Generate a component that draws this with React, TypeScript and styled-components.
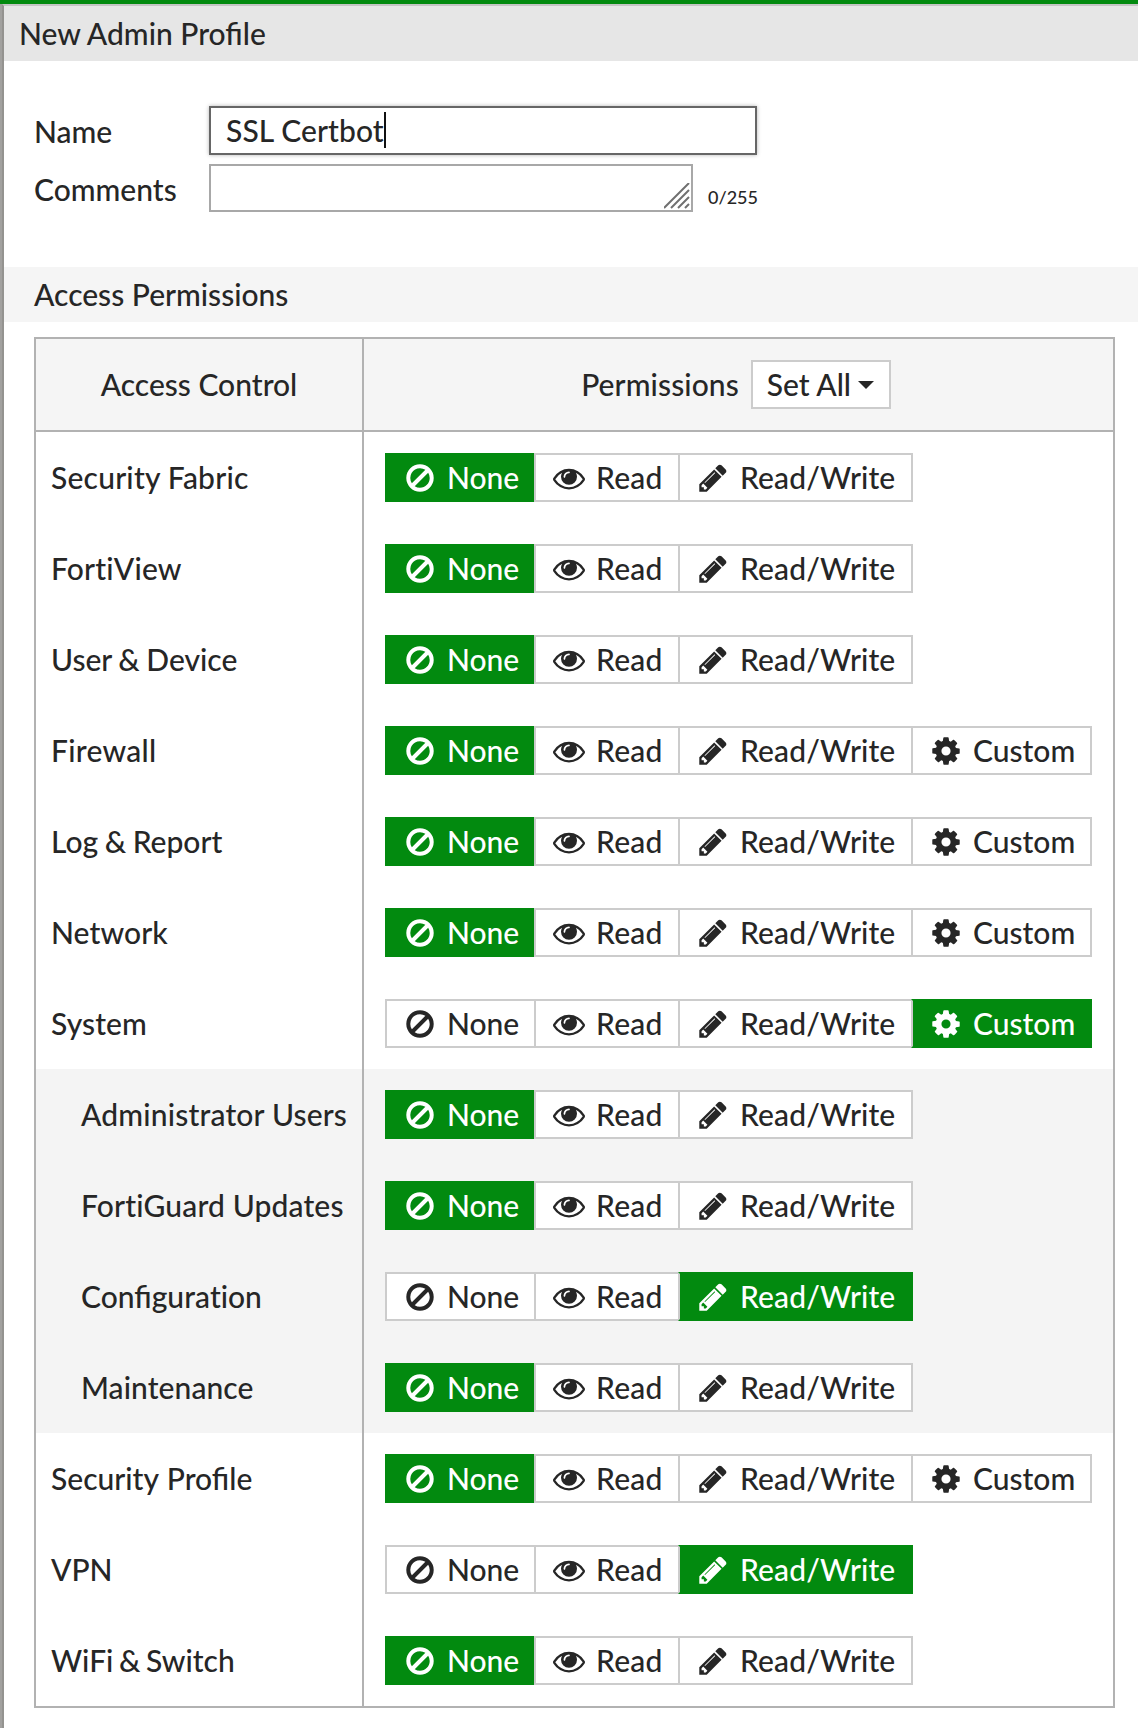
import React from "react";
import styled, { createGlobalStyle, css } from "styled-components";

const GlobalStyle = createGlobalStyle`
  *, *::before, *::after { box-sizing: border-box; }
  html, body { margin: 0; background: #fff; }
  body {
    font-family: Lato, "Open Sans", sans-serif;
    font-size: 30px;
    font-weight: 500;
    line-height: 40px;
    color: #262626;
  }
`;

const GREEN = "#028a0f";
const LINE = "#b2b2b2";

const Page = styled.div`
  height: 1728px;
  overflow: hidden;
  display: flex;
  flex-direction: column;
  border-top: 4px solid ${GREEN};
  background: #a2a19f;
`;

const Dialog = styled.main`
  flex: 1;
  margin-left: 2px;
  border-top: 2px solid #c4c4c4;
  border-left: 2px solid #949390;
  background: #fff;
`;

const TitleBar = styled.h1`
  margin: 0;
  height: 55px;
  padding: 7px 15px;
  background: #e6e6e6;
  font-size: 30px;
  font-weight: inherit;
  line-height: 40px;
`;

const Form = styled.form`
  display: flex;
  flex-direction: column;
  gap: 9px;
  padding: 45px 30px 55px;
`;

const Field = styled.div`
  display: flex;
  align-items: center;
`;

const Label = styled.label`
  width: 175px;
  padding-top: 1px;
`;

const NameInput = styled.div`
  width: 548px;
  height: 49px;
  display: flex;
  align-items: center;
  padding: 0 15px 2px;
  border: 2px solid #666;
  background: #fff;
  box-shadow: 0 0 4px rgba(0, 0, 0, 0.3);
  letter-spacing: 0.1px;
`;

const Caret = styled.span`
  width: 2px;
  height: 36px;
  background: #111;
`;

const CommentsInput = styled.div`
  width: 484px;
  height: 48px;
  display: flex;
  justify-content: flex-end;
  align-items: flex-end;
  padding: 0 1px 1px;
  border: 2px solid #a8a8a8;
`;

const Counter = styled.span`
  margin: 18px 0 0 15px;
  font-size: 18px;
  line-height: 24px;
`;

const SectionTitle = styled.h2`
  margin: 0;
  height: 55px;
  padding: 7px 30px;
  background: #f5f5f5;
  font-size: 30px;
  font-weight: inherit;
  line-height: 40px;
`;

const Table = styled.section`
  width: 1081px;
  margin: 15px 0 0 30px;
  border: 2px solid ${LINE};
`;

const rowGrid = css`
  display: grid;
  grid-template-columns: 326px 1fr;
`;

const HeadRow = styled.div`
  ${rowGrid}
  height: 93px;
  background: #f5f5f5;
  border-bottom: 2px solid ${LINE};
`;

const HeadCell = styled.div<{ $divided?: boolean }>`
  display: flex;
  align-items: center;
  justify-content: center;
  gap: 12px;
  padding-right: ${(p) => (p.$divided ? 5 : 0)}px;
  border-left: ${(p) => (p.$divided ? `2px solid ${LINE}` : "none")};
`;

const HeadText = styled.span<{ $tracking?: number }>`
  padding-bottom: 2px;
  letter-spacing: ${(p) => p.$tracking ?? 0}px;
`;

const SetAll = styled.button`
  width: 140px;
  height: 49px;
  display: flex;
  align-items: center;
  justify-content: space-between;
  padding: 0 15px 0 14px;
  border: 2px solid #ccc;
  background: #fff;
  color: inherit;
  font: inherit;
  white-space: nowrap;
`;

const Row = styled.div<{ $nested?: boolean }>`
  ${rowGrid}
  height: 91px;
  background: ${(p) => (p.$nested ? "#f4f4f4" : "#fff")};
`;

const RowLabel = styled.div<{ $nested?: boolean; $tracking: number; $wordGap: number }>`
  align-self: center;
  padding: 0 0 2px ${(p) => (p.$nested ? 45 : 15)}px;
  letter-spacing: ${(p) => p.$tracking}px;
  word-spacing: ${(p) => p.$wordGap}px;
  white-space: nowrap;
`;

const Unjoined = styled.span`
  font-variant-ligatures: none;
`;

const RowOptions = styled.div`
  display: flex;
  align-items: center;
  padding-left: 21px;
  border-left: 2px solid ${LINE};
`;

const Option = styled.button<{ $width: number; $selected: boolean }>`
  width: ${(p) => p.$width}px;
  height: 49px;
  display: flex;
  align-items: center;
  padding: 0 0 0 17px;
  border: 2px solid ${(p) => (p.$selected ? GREEN : "#ccc")};
  background: ${(p) => (p.$selected ? GREEN : "#fff")};
  color: ${(p) => (p.$selected ? "#fff" : "inherit")};
  font: inherit;
  white-space: nowrap;

  & + & {
    margin-left: -2px;
    border-left-color: #ccc;
  }
`;

const OptionText = styled.span<{ $tracking: number }>`
  margin-left: 11px;
  padding-bottom: 2px;
  letter-spacing: ${(p) => p.$tracking}px;
`;

const Glyph = styled.svg`
  flex: none;
  width: 32px;
  height: 32px;
  fill: currentColor;
`;

type Level = "none" | "read" | "write" | "custom";

const icons: Record<Level, string> = {
  none: "M1440 893q0-161-87-295l-754 753q137 89 297 89 111 0 211.5-43.5t173.5-116.5 116-174.5 43-212.5zm-999 299l755-754q-135-91-300-91-148 0-273 73t-198 199-73 274q0 162 89 299zm1223-299q0 157-61 300t-163.5 246-245 164-298.5 61-298.5-61-245-164-163.5-246-61-300 61-299.5 163.5-245.5 245-164 298.5-61 298.5 61 245 164 163.5 245.5 61 299.5z",
  read: "M1664 960q-152-236-381-353 61 104 61 225 0 185-131.5 316.5t-316.5 131.5-316.5-131.5-131.5-316.5q0-121 61-225-229 117-381 353 133 205 333.5 326.5t434.5 121.5 434.5-121.5 333.5-326.5zm-720-384q0-20-14-34t-34-14q-125 0-214.5 89.5t-89.5 214.5q0 20 14 34t34 14 34-14 14-34q0-86 61-147t147-61q20 0 34-14t14-34zm848 384q0 34-20 69-140 230-376.5 368.5t-499.5 138.5-499.5-139-376.5-368q-20-35-20-69t20-69q140-229 376.5-368t499.5-139 499.5 139 376.5 368q20 35 20 69z",
  write: "M491 1536l91-91-235-235-91 91v107h128v128h107zm523-928q0-22-22-22-10 0-17 7l-542 542q-7 7-7 17 0 22 22 22 10 0 17-7l542-542q7-7 7-17zm-54-192l416 416-832 832h-416v-416zm683 96q0 53-37 90l-166 166-416-416 166-165q36-38 90-38 53 0 91 38l235 234q37 39 37 91z",
  custom: "M1152 896q0-106-75-181t-181-75-181 75-75 181 75 181 181 75 181-75 75-181zm512-109v222q0 12-8 23t-20 13l-185 28q-19 54-39 91 35 50 107 138 10 12 10 25t-9 23q-27 37-99 108t-94 71q-12 0-26-9l-138-108q-44 23-91 38-16 136-29 186-7 28-36 28h-222q-14 0-24.5-8.5t-11.5-21.5l-28-184q-49-16-90-37l-141 107q-10 9-25 9-14 0-25-11-126-114-165-168-7-10-7-23 0-12 8-23 15-21 51-66.5t54-70.5q-27-50-41-99l-183-27q-13-2-21-12.5t-8-23.5v-222q0-12 8-23t19-13l186-28q14-46 39-92-40-57-107-138-10-12-10-24 0-10 9-23 26-36 98.5-107.5t94.5-71.5q13 0 26 10l138 107q44-23 91-38 16-136 29-186 7-28 36-28h222q14 0 24.5 8.5t11.5 21.5l28 184q49 16 90 37l142-107q9-9 24-9 13 0 25 10 129 119 165 170 7 8 7 22 0 12-8 23-15 21-51 66.5t-54 70.5q26 50 41 98l183 28q13 2 21 12.5t8 23.5z",
};

const levels: { id: Level; text: string; width: number; tracking: number }[] = [
  { id: "none", text: "None", width: 151, tracking: 0 },
  { id: "read", text: "Read", width: 146, tracking: 0.25 },
  { id: "write", text: "Read/Write", width: 235, tracking: 0.12 },
  { id: "custom", text: "Custom", width: 181, tracking: 0 },
];

interface Permission {
  name: string;
  value: Level;
  custom?: boolean;
  nested?: boolean;
  tracking?: number;
  wordGap?: number;
}

const permissions: Permission[] = [
  { name: "Security Fabric", value: "none", tracking: 0.22 },
  { name: "FortiView", value: "none", tracking: 0.18 },
  { name: "User & Device", value: "none", wordGap: -1 },
  { name: "Firewall", value: "none", custom: true, tracking: 0.28 },
  { name: "Log & Report", value: "none", custom: true, wordGap: -1 },
  { name: "Network", value: "none", custom: true, tracking: 0.1 },
  { name: "System", value: "custom", custom: true, tracking: 0.1 },
  { name: "Administrator Users", value: "none", nested: true, tracking: 0.18 },
  { name: "FortiGuard Updates", value: "none", nested: true, tracking: 0.14 },
  { name: "Configuration", value: "write", nested: true },
  { name: "Maintenance", value: "none", nested: true, tracking: 0.08 },
  { name: "Security Profile", value: "none", custom: true, wordGap: 1 },
  { name: "VPN", value: "write" },
  { name: "WiFi & Switch", value: "none", wordGap: -2 },
];

// Keeps "fi" joined but draws "t" and "i" as separate letters.
function LabelText({ text }: { text: string }) {
  const [before, after] = text.split("ti");
  if (after === undefined) return <>{text}</>;
  return (
    <>
      {before}
      <Unjoined>ti</Unjoined>
      {after}
    </>
  );
}

function PermissionRow({ name, value, custom, nested, tracking = 0, wordGap = 0 }: Permission) {
  return (
    <Row $nested={nested}>
      <RowLabel $nested={nested} $tracking={tracking} $wordGap={wordGap}>
        <LabelText text={name} />
      </RowLabel>
      <RowOptions>
        {levels
          .filter((level) => custom || level.id !== "custom")
          .map((level) => (
            <Option key={level.id} type="button" $width={level.width} $selected={level.id === value}>
              <Glyph viewBox="0 0 1792 1792">
                <path d={icons[level.id]} />
              </Glyph>
              <OptionText $tracking={level.tracking}>{level.text}</OptionText>
            </Option>
          ))}
      </RowOptions>
    </Row>
  );
}

export default function App() {
  return (
    <Page>
      <GlobalStyle />
      <Dialog>
        <TitleBar>New Admin Profile</TitleBar>
        <Form>
          <Field>
            <Label>Name</Label>
            <NameInput>
              SSL Certbot
              <Caret />
            </NameInput>
          </Field>
          <Field>
            <Label>Comments</Label>
            <CommentsInput>
              <svg width="26" height="26" fill="none" stroke="#707070" strokeWidth="2">
                <path d="M0 25L25 0M7 25L25 7M14 25L25 14M21 25L25 21" />
              </svg>
            </CommentsInput>
            <Counter>0/255</Counter>
          </Field>
        </Form>
        <SectionTitle>Access Permissions</SectionTitle>
        <Table>
          <HeadRow>
            <HeadCell>
              <HeadText>Access Control</HeadText>
            </HeadCell>
            <HeadCell $divided>
              <HeadText $tracking={0.1}>Permissions</HeadText>
              <SetAll type="button">
                <HeadText>Set All</HeadText>
                <svg width="16" height="8" fill="currentColor">
                  <path d="M0 0H16L8 8Z" />
                </svg>
              </SetAll>
            </HeadCell>
          </HeadRow>
          {permissions.map((permission) => (
            <PermissionRow key={permission.name} {...permission} />
          ))}
        </Table>
      </Dialog>
    </Page>
  );
}
